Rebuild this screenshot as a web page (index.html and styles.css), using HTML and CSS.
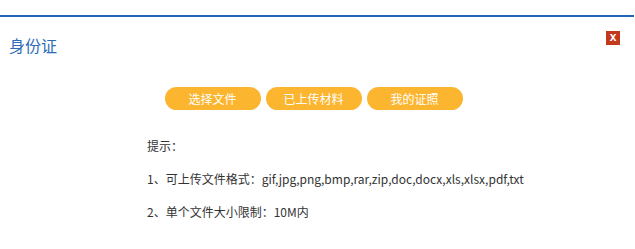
FILE: index.html
```
<!DOCTYPE html>
<html lang="zh-CN">
<head>
<meta charset="utf-8">
<link rel="stylesheet" href="styles.css">
</head>
<body>
<div class="dialog">
  <div class="header">
    <span class="title">身份证</span>
    <span class="close">x</span>
  </div>
  <div class="btns">
    <span class="btn">选择文件</span>
    <span class="btn">已上传材料</span>
    <span class="btn">我的证照</span>
  </div>
  <div class="tips">
    <p>提示：</p>
    <p>1、可上传文件格式：gif,jpg,png,bmp,rar,zip,doc,docx,xls,xlsx,pdf,txt</p>
    <p>2、单个文件大小限制：10M内</p>
  </div>
</div>
</body>
</html>
```
FILE: styles.css
```
html, body { margin: 0; padding: 0; background: #fff; }
body { font-family: "Noto Sans CJK SC", "Noto Sans", sans-serif; }
.dialog {
  margin-top: 15px;
  border-top: 2px solid #2167b7;
  width: 634px;
}
.header {
  display: flex;
  justify-content: space-between;
  align-items: flex-start;
  padding: 14px 14px 0 9px;
  height: 40px;
  box-sizing: border-box;
}
.title {
  margin-top: 3px;
  font-size: 16px;
  line-height: 22px;
  color: #2c6cb8;
}
.close {
  width: 14px;
  height: 14px;
  background: #c2391b;
  color: #fff;
  font-family: "Liberation Sans", sans-serif;
  font-weight: bold;
  font-size: 12px;
  line-height: 12px;
  text-align: center;
}
.btns {
  display: flex;
  justify-content: center;
  gap: 5px;
  margin-top: 30px;
  padding-right: 7px;
}
.btn {
  width: 96px;
  height: 23px;
  line-height: 23px;
  border-radius: 12px;
  background: #fbb52f;
  color: #fff;
  font-size: 12px;
  text-align: center;
}
.tips {
  padding-left: 147px;
  margin-top: 26px;
  color: #333;
  font-size: 12px;
}
.tips p {
  margin: 0 0 14px;
  line-height: 19px;
}
```
